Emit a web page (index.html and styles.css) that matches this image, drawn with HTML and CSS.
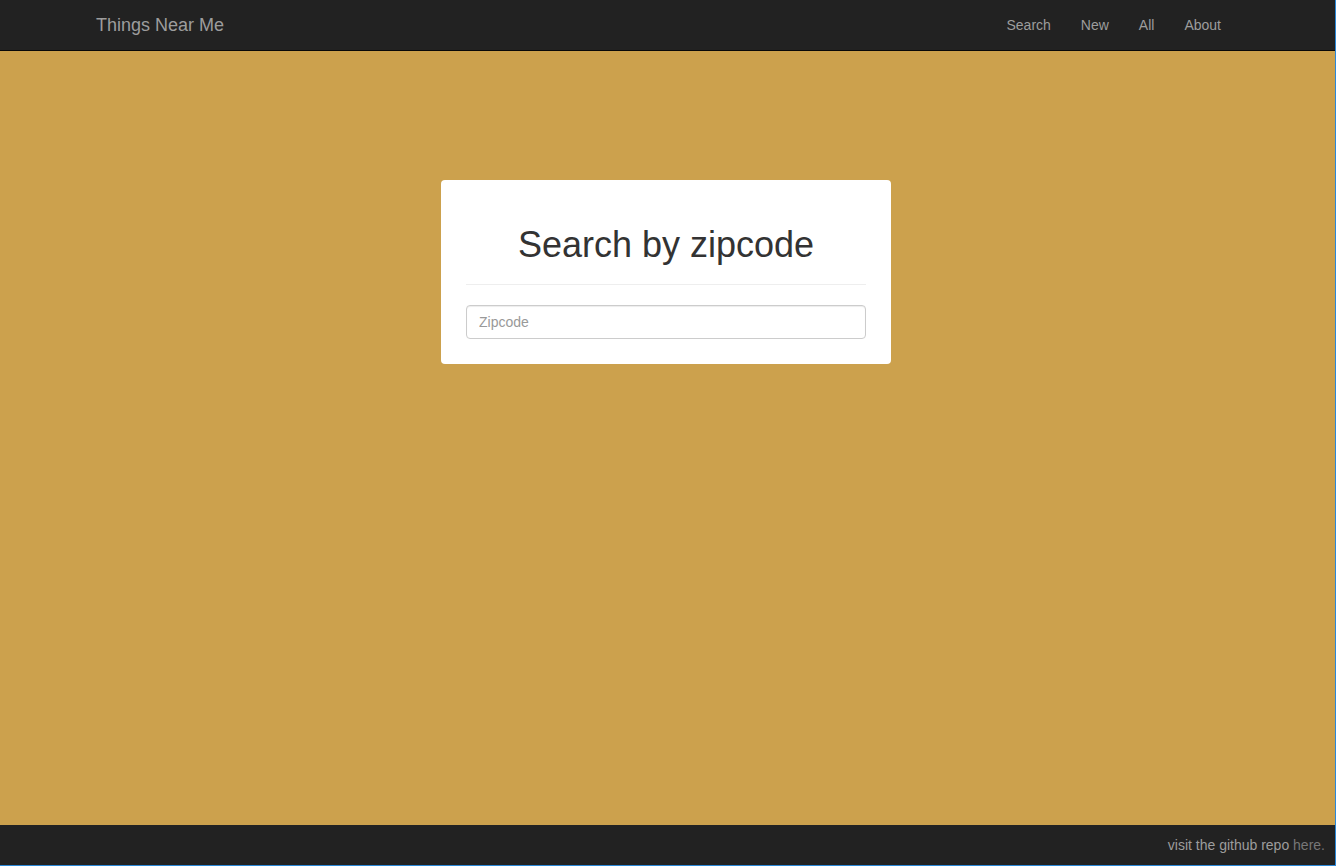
FILE: index.html
```html
<!DOCTYPE html>
<html lang="en">
<head>
<meta charset="utf-8">
<title>Things Near Me</title>
<link rel="stylesheet" href="styles.css">
</head>
<body>
<div class="page">
  <nav class="navbar">
    <div class="navbar-inner">
      <a class="brand" href="#">Things Near Me</a>
      <ul class="nav-links">
        <li><a href="#">Search</a></li>
        <li><a href="#">New</a></li>
        <li><a href="#">All</a></li>
        <li><a href="#">About</a></li>
      </ul>
    </div>
  </nav>
  <main class="main">
    <div class="card">
      <h1 class="card-title">Search by zipcode</h1>
      <hr class="divider">
      <input class="zip-input" type="text" placeholder="Zipcode">
    </div>
  </main>
  <footer class="footer">
    <span class="footer-text">visit the github repo <a class="footer-link" href="#">here.</a></span>
  </footer>
</div>
</body>
</html>
```
FILE: styles.css
```css
* { box-sizing: border-box; }
html, body { margin: 0; padding: 0; }
body {
  font-family: "Liberation Sans", Arial, sans-serif;
  font-size: 14px;
  color: #333;
}
.page {
  height: 866px;
  display: flex;
  flex-direction: column;
  border-right: 1px solid #2b88d8;
  border-bottom: 1px solid #2b88d8;
}
.navbar {
  height: 51px;
  flex: 0 0 51px;
  background: #222;
  border-bottom: 1px solid #080808;
}
.navbar-inner {
  height: 50px;
  display: flex;
  align-items: center;
  justify-content: space-between;
  padding: 0 99px 0 81px;
}
.brand {
  color: #9d9d9d;
  font-size: 18px;
  text-decoration: none;
  padding: 15px;
  line-height: 20px;
}
.nav-links {
  list-style: none;
  margin: 0;
  padding: 0;
  display: flex;
}
.nav-links a {
  display: block;
  color: #9d9d9d;
  text-decoration: none;
  padding: 15px;
  line-height: 20px;
  font-size: 14px;
}
.main {
  flex: 1;
  background: #cca14d;
  display: flex;
  justify-content: center;
  align-items: flex-start;
  padding: 129px 3px 0 0;
}
.card {
  width: 450px;
  background: #fff;
  border-radius: 4px;
  padding: 25px;
}
.card-title {
  margin: 20px 0 10px;
  font-size: 36px;
  font-weight: 500;
  line-height: 39px;
  text-align: center;
  color: #333;
}
.divider {
  margin: 20px 0;
  border: 0;
  border-top: 1px solid #eee;
}
.zip-input {
  display: block;
  width: 100%;
  height: 34px;
  padding: 6px 12px;
  font-family: "Liberation Sans", Arial, sans-serif;
  font-size: 14px;
  color: #555;
  background: #fff;
  border: 1px solid #ccc;
  border-radius: 4px;
  box-shadow: inset 0 1px 1px rgba(0,0,0,.075);
  outline: none;
}
.zip-input::placeholder { color: #999; }
.footer {
  flex: 0 0 40px;
  height: 40px;
  background: #222;
  display: flex;
  align-items: center;
  justify-content: flex-end;
  padding-right: 10px;
}
.footer-text {
  color: #9d9d9d;
  font-size: 14px;
}
.footer-link {
  color: #777;
  text-decoration: none;
}
```
